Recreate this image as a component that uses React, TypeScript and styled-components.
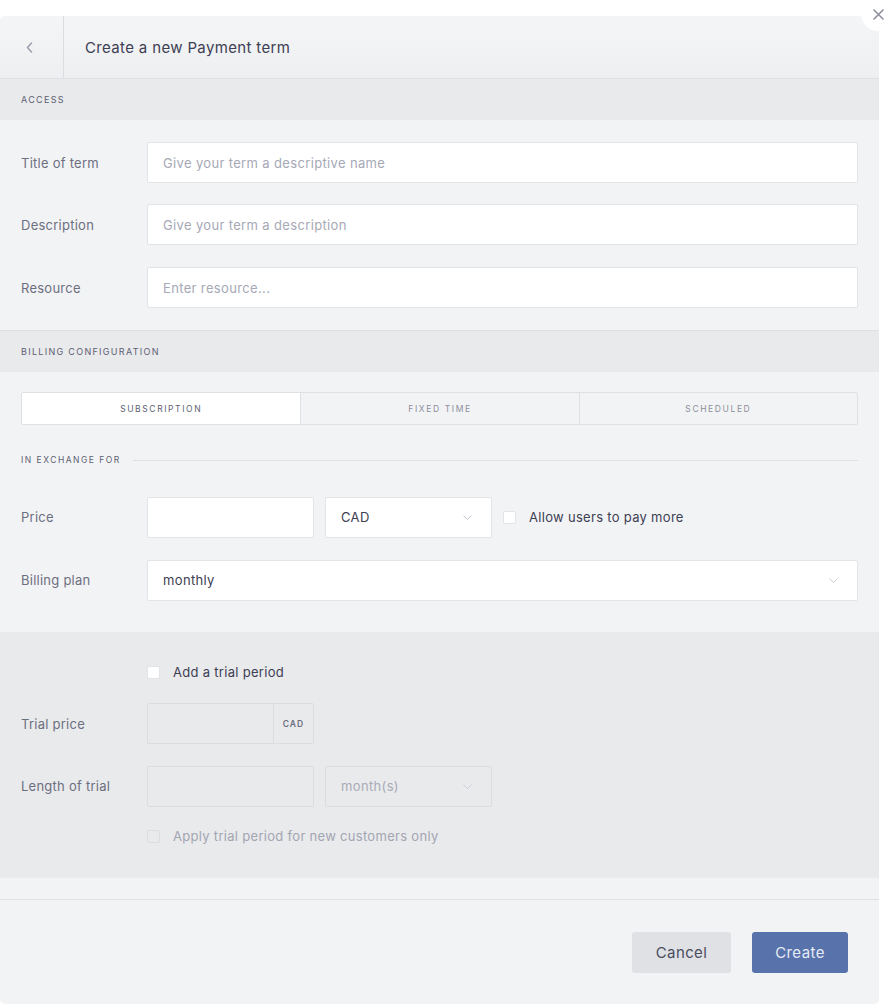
import React from "react";
import styled, { createGlobalStyle } from "styled-components";

const Global = createGlobalStyle`
  html, body { margin: 0; padding: 0; background: #ffffff; }
  body { font-family: Inter, "Noto Sans", "Liberation Sans", sans-serif; -webkit-font-smoothing: antialiased; }
  * { box-sizing: border-box; }
`;

const Page = styled.div`
  padding-top: 16px;
  width: 895px;
  height: 1005px;
  position: relative;
`;

const Modal = styled.div`
  width: 879px;
  height: 988px;
  background: #f2f3f5;
  border-radius: 5px;
  position: relative;
  display: flex;
  flex-direction: column;
`;

const Close = styled.button`
  position: absolute;
  top: -19px;
  right: -16px;
  width: 34px;
  height: 34px;
  border-radius: 50%;
  background: #ffffff;
  border: none;
  display: flex;
  align-items: center;
  justify-content: center;
  padding: 0;
`;

const Header = styled.div`
  height: 63px;
  flex: none;
  display: flex;
  align-items: stretch;
  border-bottom: 1px solid #dfe0e4;
  background: linear-gradient(#f4f5f6, #eeeff1);
  border-radius: 5px 5px 0 0;
`;

const Back = styled.div`
  width: 64px;
  border-right: 1px solid #dcdde2;
  display: flex;
  align-items: center;
  justify-content: center;
  padding-right: 4px;
`;

const Title = styled.div`
  display: flex;
  align-items: center;
  padding-left: 21px;
  font-size: 15px;
  color: #3d4053;
  letter-spacing: 0.35px;
`;

const SectionBar = styled.div`
  height: 41px;
  flex: none;
  background: #e9eaec;
  display: flex;
  align-items: center;
  padding-left: 21px;
  font-size: 9px;
  letter-spacing: 1.3px;
  color: #5d6072;
  text-transform: uppercase;
`;

const Section = styled.div<{ $pt: number; $pb: number; $alt?: boolean; $border?: boolean }>`
  padding: ${(p) => p.$pt}px 21px ${(p) => p.$pb}px 21px;
  display: flex;
  flex-direction: column;
  flex: none;
  background: ${(p) => (p.$alt ? "#e9eaec" : "transparent")};
  border-bottom: ${(p) => (p.$border ? "1px solid #dfe0e4" : "none")};
`;

const Row = styled.div<{ $h?: number; $mt?: number }>`
  display: grid;
  grid-template-columns: 126px 1fr;
  align-items: center;
  height: ${(p) => p.$h ?? 41}px;
  margin-top: ${(p) => p.$mt ?? 0}px;
`;

const Label = styled.div`
  font-size: 13px;
  letter-spacing: 0.25px;
  color: #6c6f80;
`;

const Field = styled.div`
  display: flex;
  align-items: center;
  gap: 11px;
`;

const Input = styled.div<{ $w?: number; $muted?: boolean }>`
  height: 41px;
  width: ${(p) => (p.$w ? `${p.$w}px` : "100%")};
  flex: ${(p) => (p.$w ? "none" : "1")};
  background: ${(p) => (p.$muted ? "transparent" : "#ffffff")};
  border: 1px solid ${(p) => (p.$muted ? "#dcdde1" : "#e3e4e8")};
  border-radius: 2px;
  display: flex;
  align-items: center;
  padding: 0 15px;
  font-size: 13px;
  letter-spacing: 0.35px;
  color: #a6a8b6;
`;

const Select = styled(Input)`
  justify-content: space-between;
  color: ${(p) => (p.$muted ? "#a9abb8" : "#3d4053")};
  padding-right: 19px;
`;

const AddonInput = styled.div`
  height: 41px;
  width: 167px;
  display: flex;
  border: 1px solid #dcdde1;
  border-radius: 2px;
`;

const AddonBody = styled.div`
  flex: 1;
`;

const Addon = styled.div`
  width: 40px;
  border-left: 1px solid #dcdde1;
  display: flex;
  align-items: center;
  justify-content: center;
  font-size: 8.5px;
  font-weight: 600;
  letter-spacing: 1.1px;
  color: #6b6e80;
`;

const Check = styled.span<{ $muted?: boolean }>`
  width: 13px;
  height: 13px;
  flex: none;
  border-radius: 2px;
  background: ${(p) => (p.$muted ? "transparent" : "#ffffff")};
  border: 1px solid ${(p) => (p.$muted ? "#dcdde1" : "#e3e4e8")};
`;

const CheckLabel = styled.label<{ $muted?: boolean }>`
  display: flex;
  align-items: center;
  gap: 13px;
  font-size: 13px;
  letter-spacing: 0.3px;
  color: ${(p) => (p.$muted ? "#a3a5b2" : "#3d4053")};
`;

const Tabs = styled.div`
  display: grid;
  grid-template-columns: 1fr 1fr 1fr;
  height: 33px;
  flex: none;
  border: 1px solid #dfe0e4;
  border-radius: 2px;
`;

const Tab = styled.div<{ $active?: boolean }>`
  display: flex;
  align-items: center;
  justify-content: center;
  background: ${(p) => (p.$active ? "#ffffff" : "transparent")};
  font-size: 8.5px;
  letter-spacing: 1.6px;
  color: ${(p) => (p.$active ? "#5d6072" : "#8c8f9c")};
  & + & { border-left: 1px solid #dfe0e4; }
`;

const Divider = styled.div`
  display: flex;
  align-items: center;
  gap: 12px;
  height: 16px;
  margin-top: 27px;
  font-size: 8.5px;
  letter-spacing: 1.5px;
  color: #5d6072;
  &::after {
    content: "";
    flex: 1;
    height: 1px;
    background: #dfe0e4;
  }
`;

const Spacer = styled.div`
  height: 22px;
  flex: none;
  border-bottom: 1px solid #dfe0e4;
`;

const Footer = styled.div`
  display: flex;
  justify-content: flex-end;
  gap: 21px;
  padding: 32px 31px 0 0;
`;

const Button = styled.button<{ $primary?: boolean }>`
  height: 41px;
  padding: 0;
  width: ${(p) => (p.$primary ? "96px" : "99px")};
  border: none;
  border-radius: 3px;
  font-family: inherit;
  font-size: 15px;
  letter-spacing: 0.4px;
  background: ${(p) => (p.$primary ? "#5873ac" : "#dfe1e5")};
  color: ${(p) => (p.$primary ? "#e6ebf5" : "#4a4d5f")};
`;

const Chevron = ({ muted }: { muted?: boolean }) => (
  <svg width="9" height="5" viewBox="0 0 9 5" fill="none">
    <path d="M0.5 0.5 L4.5 4.5 L8.5 0.5" stroke={muted ? "#cfd1d8" : "#c8cad2"} strokeWidth="1" />
  </svg>
);

export default function App() {
  return (
    <Page>
      <Global />
      <Modal>
        <Close aria-label="close">
          <svg width="11" height="11" viewBox="0 0 11 11">
            <path d="M1 1 L10 10 M10 1 L1 10" stroke="#8e909d" strokeWidth="1.6" strokeLinecap="round" />
          </svg>
        </Close>
        <Header>
          <Back>
            <svg width="7" height="11" viewBox="0 0 7 11" fill="none">
              <path d="M5.5 1 L1.5 5.5 L5.5 10" stroke="#9b9dab" strokeWidth="1.5" strokeLinecap="round" strokeLinejoin="round" />
            </svg>
          </Back>
          <Title>Create a new Payment term</Title>
        </Header>

        <SectionBar>Access</SectionBar>
        <Section $pt={22} $pb={22} $border>
          <Row>
            <Label>Title of term</Label>
            <Input>Give your term a descriptive name</Input>
          </Row>
          <Row $mt={21}>
            <Label>Description</Label>
            <Input>Give your term a description</Input>
          </Row>
          <Row $mt={22}>
            <Label>Resource</Label>
            <Input>Enter resource...</Input>
          </Row>
        </Section>

        <SectionBar>Billing configuration</SectionBar>
        <Section $pt={20} $pb={31}>
          <Tabs>
            <Tab $active>SUBSCRIPTION</Tab>
            <Tab>FIXED TIME</Tab>
            <Tab>SCHEDULED</Tab>
          </Tabs>
          <Divider>IN EXCHANGE FOR</Divider>
          <Row $mt={28} $h={42}>
            <Label>Price</Label>
            <Field>
              <Input $w={167} />
              <Select $w={167}>
                CAD
                <Chevron />
              </Select>
              <CheckLabel>
                <Check />
                Allow users to pay more
              </CheckLabel>
            </Field>
          </Row>
          <Row $mt={21} $h={42}>
            <Label>Billing plan</Label>
            <Select>
              monthly
              <Chevron />
            </Select>
          </Row>
        </Section>

        <Section $pt={27} $pb={32} $alt>
          <Row $h={26}>
            <span />
            <CheckLabel>
              <Check />
              Add a trial period
            </CheckLabel>
          </Row>
          <Row $mt={18}>
            <Label>Trial price</Label>
            <AddonInput>
              <AddonBody />
              <Addon>CAD</Addon>
            </AddonInput>
          </Row>
          <Row $mt={21} $h={42}>
            <Label>Length of trial</Label>
            <Field>
              <Input $w={167} $muted />
              <Select $w={167} $muted>
                month(s)
                <Chevron muted />
              </Select>
            </Field>
          </Row>
          <Row $mt={19} $h={20}>
            <span />
            <CheckLabel $muted>
              <Check $muted />
              Apply trial period for new customers only
            </CheckLabel>
          </Row>
        </Section>

        <Spacer />
        <Footer>
          <Button>Cancel</Button>
          <Button $primary>Create</Button>
        </Footer>
      </Modal>
    </Page>
  );
}
